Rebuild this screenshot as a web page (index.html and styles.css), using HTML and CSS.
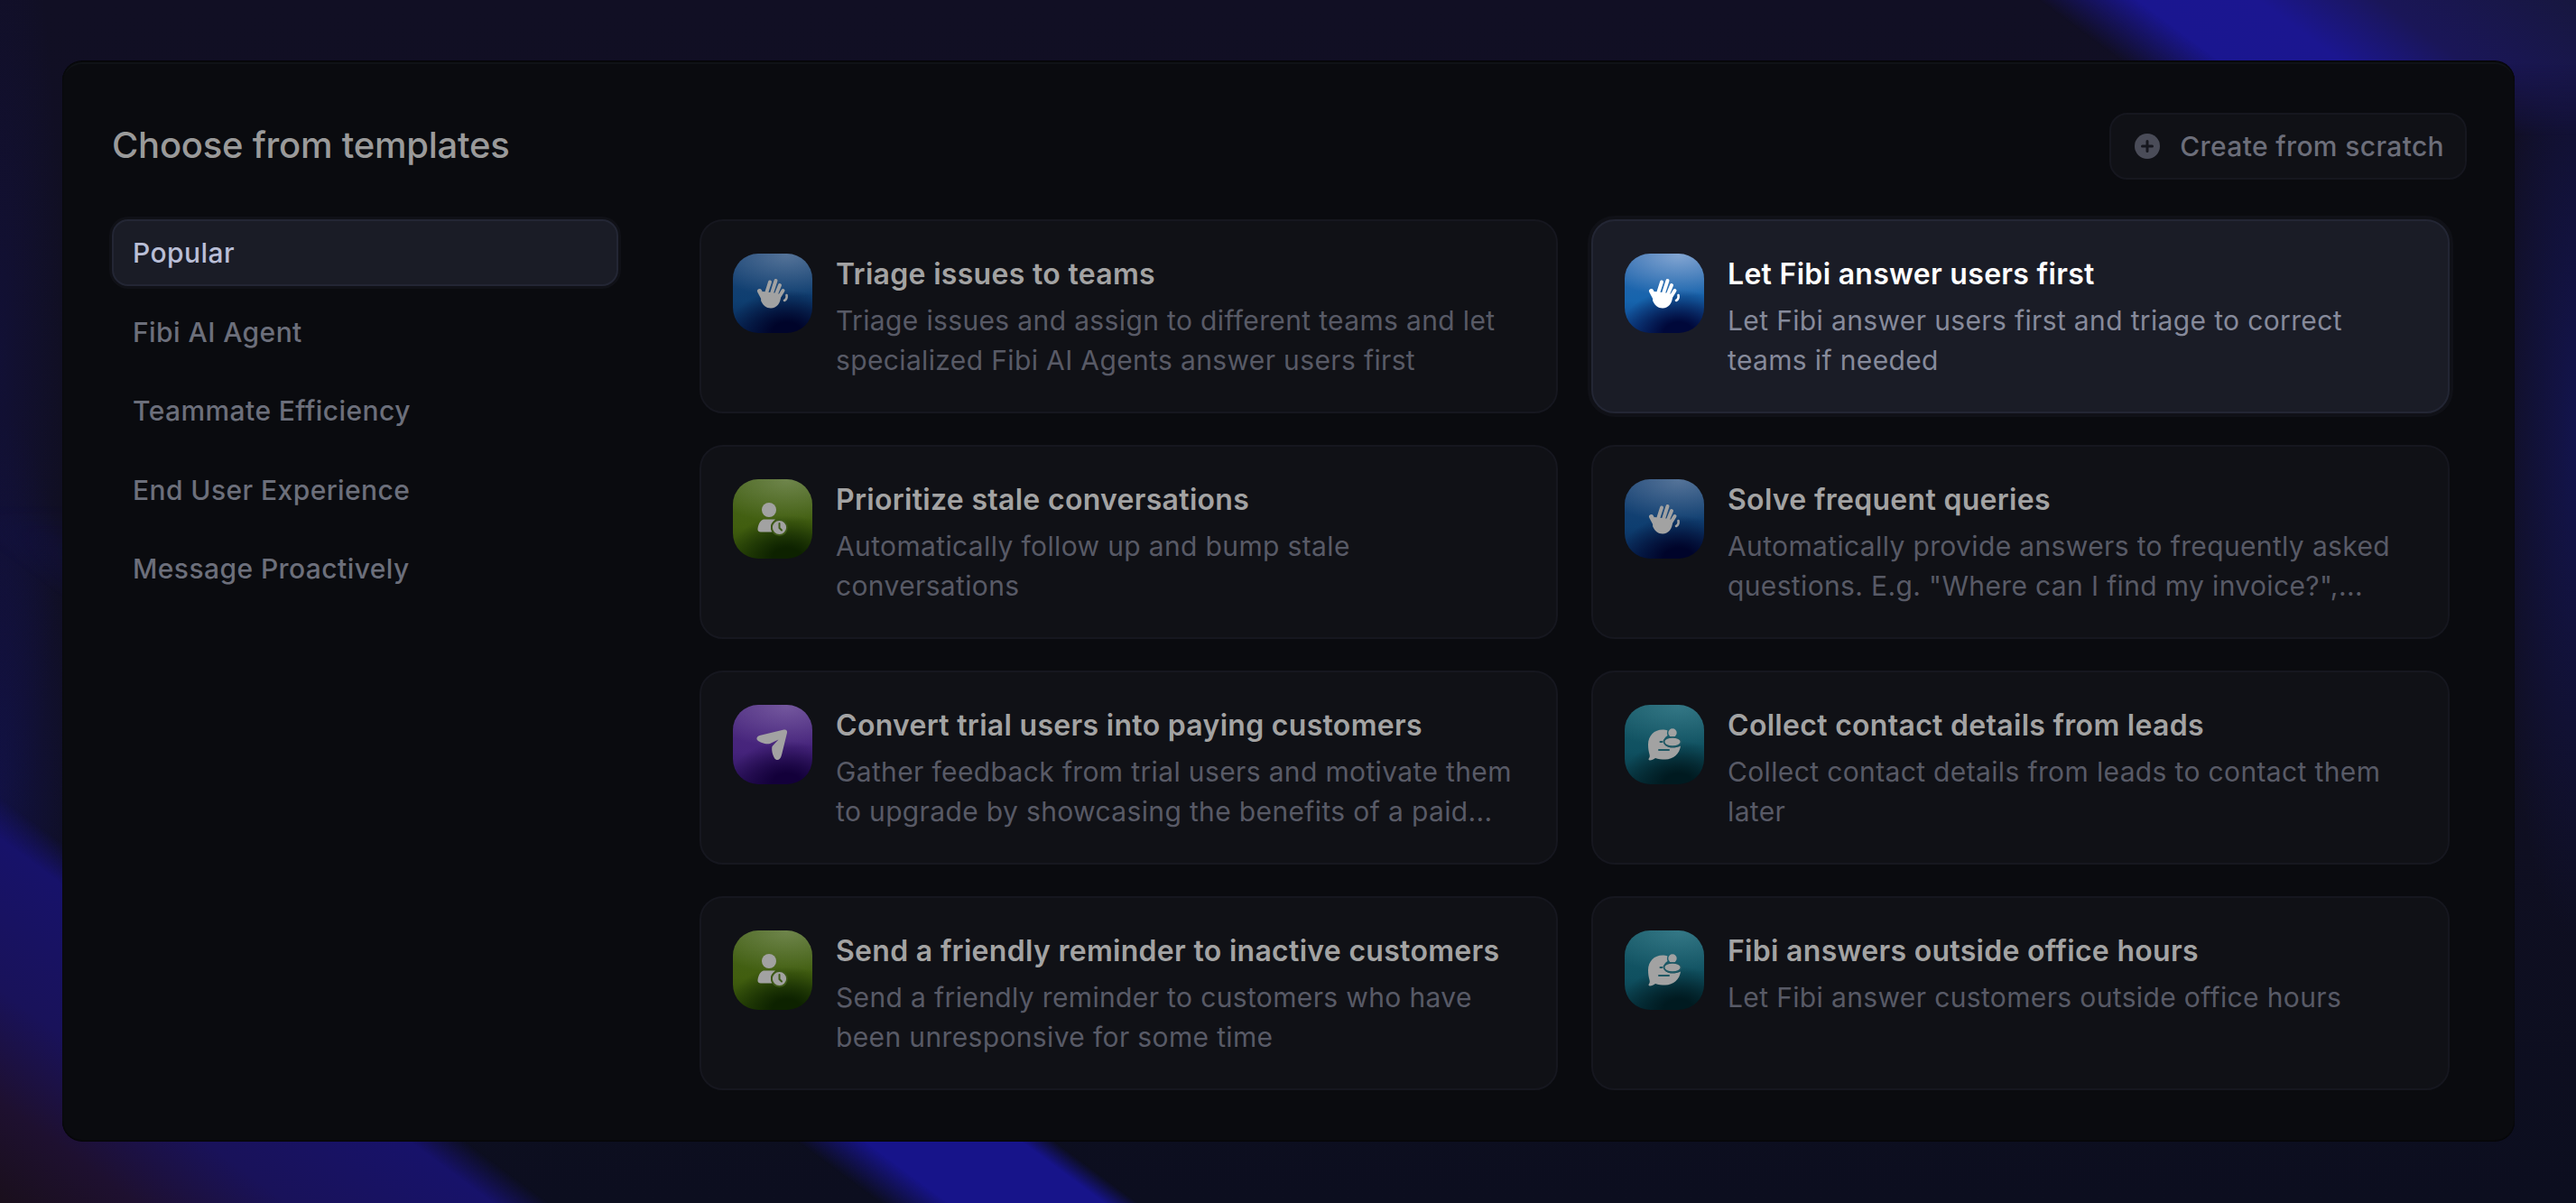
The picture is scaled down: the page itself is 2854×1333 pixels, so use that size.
FILE: index.html
```html
<!DOCTYPE html>
<html lang="en">
<head>
<meta charset="utf-8">
<title>Choose from templates</title>
<link rel="stylesheet" href="styles.css">
</head>
<body>
<svg class="defs" width="0" height="0" aria-hidden="true">
  <defs>
    <g id="i-hand">
      <path class="ln" stroke-width="5" d="M29.5 41.500 L34 50"/>
      <path class="ln" stroke-width="4" d="M41 31.500 L37 44"/>
      <path class="ln" stroke-width="4" d="M47.500 30 L43 44"/>
      <path class="ln" stroke-width="4" d="M52 35 L47.500 46"/>
      <path class="ln" stroke-width="4" d="M55.500 41 L50 50"/>
      <path class="fl" d="M33 42 L50 44 L53 47 C53 55 48.500 60.500 42 60.500 C37 60.500 33 57 31 52 Z"/>
      <path class="ln" stroke-width="2.600" d="M59.500 46 C60 48.500 59 51 57 52"/>
    </g>
    <g id="i-person">
      <circle class="fl" cx="40" cy="34" r="8"/>
      <path class="fl" d="M34 44.5 H47 C46 46 42 48 42 53 C42 55 42.5 57 43.5 58.5 H31 C28.500 58.500 27 57 27.500 54.500 C28.500 49 30.500 45.500 34 44.500 Z"/>
      <circle class="fl cut" cx="51.500" cy="53.500" r="8.500"/>
      <path class="hands" d="M51.500 49 V54 L54 56.500"/>
    </g>
    <g id="i-send">
      <path class="fl" d="M56.500 27.500 C59 27 60.500 28.500 60 31 L54 55.500 C52.500 61.500 48.500 62.500 46 59 C44 55.500 42.500 50 43.500 46 L50.500 38.500 L41 43 C36 44 30 41.500 27.500 39.500 C25.500 37.500 26.500 35 29.500 34 Z"/>
    </g>
    <g id="i-chat">
      <path class="fl" d="M42 27.500 C44 27.500 46 27.800 47.500 28.600 C46.800 30 46.700 32.500 47.500 34 C44.500 35.500 42.800 38.500 43.200 41.500 C43.800 45 47.500 47.500 53 47.500 C56 47.500 59 47 62 45.500 C61 54 54 60.500 45 60.500 C41 60.500 37 60 34 59 C32 60.500 30 61.500 28 61.500 C26.500 61.500 26 60.300 27 59 C27.800 58 28 56.500 27.500 55 C26.500 51.500 26 48 26 44 C26 34 33 27.500 42 27.500 Z"/>
      <circle class="fl" cx="53" cy="31" r="4.700"/>
      <ellipse class="fl cut" cx="53" cy="41" rx="9.500" ry="5.200"/>
      <path class="hands" d="M39.500 41 H41.500 M38 50 H49"/>
    </g>
  </defs>
</svg>
<main class="panel">
  <header class="head">
    <h1 class="title">Choose from templates</h1>
    <button class="scratch" type="button">
      <svg class="plus" viewBox="0 0 28 28" width="28" height="28"><circle cx="14" cy="14" r="14" fill="#4a4c58"/><path d="M14 8.500V19.500M8.500 14H19.500" stroke="#16171e" stroke-width="3" stroke-linecap="round"/></svg>
      <span>Create from scratch</span>
    </button>
  </header>
  <div class="body">
    <nav class="nav">
      <a class="nav-item active">Popular</a>
      <a class="nav-item">Fibi AI Agent</a>
      <a class="nav-item">Teammate Efficiency</a>
      <a class="nav-item">End User Experience</a>
      <a class="nav-item">Message Proactively</a>
    </nav>
    <section class="grid">
      <article class="card">
        <div class="ico blue"><svg viewBox="0 0 88 88" width="88" height="88"><use href="#i-hand"/></svg></div>
        <div class="txt"><h2>Triage issues to teams</h2><p>Triage issues and assign to different teams and let specialized Fibi AI Agents answer users first</p></div>
      </article>
      <article class="card active">
        <div class="ico blue"><svg viewBox="0 0 88 88" width="88" height="88"><use href="#i-hand"/></svg></div>
        <div class="txt"><h2>Let Fibi answer users first</h2><p>Let Fibi answer users first and triage to correct teams if needed</p></div>
      </article>
      <article class="card">
        <div class="ico green"><svg viewBox="0 0 88 88" width="88" height="88"><use href="#i-person"/></svg></div>
        <div class="txt"><h2>Prioritize stale conversations</h2><p>Automatically follow up and bump stale conversations</p></div>
      </article>
      <article class="card">
        <div class="ico blue"><svg viewBox="0 0 88 88" width="88" height="88"><use href="#i-hand"/></svg></div>
        <div class="txt"><h2>Solve frequent queries</h2><p>Automatically provide answers to frequently asked questions. E.g. "Where can I find my invoice?",...</p></div>
      </article>
      <article class="card">
        <div class="ico purple"><svg viewBox="0 0 88 88" width="88" height="88"><use href="#i-send"/></svg></div>
        <div class="txt"><h2>Convert trial users into paying customers</h2><p>Gather feedback from trial users and motivate them to upgrade by showcasing the benefits of a paid...</p></div>
      </article>
      <article class="card">
        <div class="ico teal"><svg viewBox="0 0 88 88" width="88" height="88"><use href="#i-chat"/></svg></div>
        <div class="txt"><h2>Collect contact details from leads</h2><p>Collect contact details from leads to contact them later</p></div>
      </article>
      <article class="card">
        <div class="ico green"><svg viewBox="0 0 88 88" width="88" height="88"><use href="#i-person"/></svg></div>
        <div class="txt"><h2>Send a friendly reminder to inactive customers</h2><p>Send a friendly reminder to customers who have been unresponsive for some time</p></div>
      </article>
      <article class="card">
        <div class="ico teal"><svg viewBox="0 0 88 88" width="88" height="88"><use href="#i-chat"/></svg></div>
        <div class="txt"><h2>Fibi answers outside office hours</h2><p>Let Fibi answer customers outside office hours</p></div>
      </article>
    </section>
  </div>
</main>
</body>
</html>
```
FILE: styles.css
```css
* { box-sizing: border-box; }
html, body { margin: 0; height: 100%; }
body {
  position: relative;
  width: 2854px;
  height: 1333px;
  overflow: hidden;
  padding: 68px 68px 69px 69px;
  font-family: Inter, "Liberation Sans", sans-serif;
  background:
    radial-gradient(ellipse 90px 420px at 0px 880px, rgba(20,20,110,.42), transparent),
    radial-gradient(ellipse 70px 560px at 0px 400px, rgba(20,18,80,.4), transparent),
    radial-gradient(ellipse 90px 560px at 2854px 480px, rgba(20,22,95,.7), transparent),
    linear-gradient(180deg, #110f24 0%, #100f22 60%, #0c0e1f 100%);
  display: flex;
}
body::before,
body::after {
  content: "";
  position: absolute;
  inset: 0;
}
/* streak leaving the top edge */
body::before {
  background: linear-gradient(36.5deg,
    transparent 2415px, #1a1690 2480px, #1b1690 2560px,
    #1a1658 2640px, #17173f 2770px);
  -webkit-mask-image: linear-gradient(180deg, #000 70px, transparent 150px);
  mask-image: linear-gradient(180deg, #000 70px, transparent 150px);
}
/* streaks leaving the bottom edge */
body::after {
  background: linear-gradient(36.5deg,
    #1a0f1c 0px, #1e1030 90px, #19125a 190px, #17126a 325px,
    transparent 362px, transparent 580px, #17148a 625px, #17148a 728px,
    transparent 750px);
  -webkit-mask-image: linear-gradient(180deg, transparent 560px, #000 900px);
  mask-image: linear-gradient(180deg, transparent 560px, #000 900px);
}
.defs { position: absolute; }
.panel {
  position: relative;
  z-index: 1;
  flex: 1;
  background: #0a0b0f;
  border-radius: 22px;
  box-shadow: inset 0 0 0 1px #08090b, inset 0 3px 0 #0f1216, 0 -1px 0 #050507, 0 1px 0 #050507;
  padding: 57px 53px 56px 55px;
  display: flex;
  flex-direction: column;
  gap: 44px;
}
.head {
  display: flex;
  align-items: center;
  justify-content: space-between;
}
.title {
  margin: 0 0 3px;
  font-size: 40px;
  font-weight: 500;
  color: #9a9a9a;
  letter-spacing: -0.25px;
}
.scratch {
  display: flex;
  align-items: center;
  gap: 22px;
  height: 74px;
  padding: 0 23px 0 26px;
  background: #101116;
  border: 2px solid #16171f;
  border-radius: 20px;
  font: 500 30px Inter, "Liberation Sans", sans-serif;
  letter-spacing: 0.36px;
  color: #6c6e7a;
}
.plus { display: block; }
.body {
  display: flex;
  gap: 90px;
  padding-right: 19px;
}
.nav {
  width: 561px;
  flex: none;
  display: flex;
  flex-direction: column;
  gap: 13.500px;
}
.nav-item {
  height: 74px;
  display: flex;
  align-items: center;
  padding-left: 21px;
  border: 2px solid transparent;
  border-radius: 18px;
  font-size: 30px;
  font-weight: 500;
  letter-spacing: 0.42px;
  color: #6c6f7b;
}
.nav-item.active {
  background: #1a1c26;
  border-color: #232634;
  box-shadow: 0 0 0 3px #101117;
  color: #b9bed6;
}
.grid {
  flex: 1;
  display: grid;
  grid-template-columns: 951px 951px;
  grid-auto-rows: 215px;
  column-gap: 37px;
  row-gap: 35px;
}
.card {
  display: flex;
  gap: 26px;
  padding: 36px 36px 0 35px;
  background: #101116;
  border: 2px solid #16171f;
  border-radius: 26px;
}
.card.active {
  background: #1a1c26;
  border-color: #232634;
  box-shadow: 0 0 0 4px #101117;
}
.ico {
  --glyph: #a2a2a2;
  width: 88px;
  height: 88px;
  flex: none;
  border-radius: 28px;
  overflow: hidden;
}
.ico svg { display: block; }
.fl { fill: var(--glyph); }
.cut { stroke: var(--cut); stroke-width: 1.800; }
.ln { fill: none; stroke: var(--glyph); stroke-linecap: round; }
.hands { fill: none; stroke: var(--cut); stroke-width: 2; stroke-linecap: round; stroke-linejoin: round; }
.ico.blue {
  --cut: #0e3e70;
  background:
    radial-gradient(ellipse 90px 46px at 68% 2%, rgba(170,185,205,.4), transparent),
    radial-gradient(ellipse 66px 48px at 68% 100%, #00042a 25%, transparent),
    linear-gradient(180deg, #1b4475, #0e3e70 60%, #072654);
}
.ico.green {
  --cut: #3f5a1a;
  background:
    radial-gradient(ellipse 90px 46px at 68% 2%, rgba(185,195,165,.34), transparent),
    radial-gradient(ellipse 66px 48px at 68% 100%, #0d2200 25%, transparent),
    linear-gradient(180deg, #47641c, #415e0f 60%, #2a4607);
}
.ico.purple {
  --cut: #45237b;
  background:
    radial-gradient(ellipse 90px 46px at 68% 2%, rgba(190,170,215,.34), transparent),
    radial-gradient(ellipse 66px 48px at 68% 100%, #13003a 25%, transparent),
    linear-gradient(180deg, #4d2c80, #45237b 60%, #2a1259);
}
.ico.teal {
  --cut: #1f5864;
  background:
    radial-gradient(ellipse 90px 46px at 68% 2%, rgba(110,180,195,.32), transparent),
    radial-gradient(ellipse 66px 48px at 68% 100%, #001a20 25%, transparent),
    linear-gradient(180deg, #185a68, #0f5060 60%, #073541);
}
.txt { min-width: 0; padding-top: 1px; }
.txt h2 {
  margin: 0 0 7px;
  font-size: 32px;
  line-height: 44px;
  font-weight: 600;
  letter-spacing: 0.3px;
  color: #a3a3a3;
}
.txt p {
  margin: 0;
  font-size: 30px;
  line-height: 44px;
  letter-spacing: 0.36px;
  color: #585a66;
}
.card.active h2 { color: #fff; }
.card.active p { color: #868a9b; }
.card.active .ico.blue {
  --glyph: #fff;
  --cut: #1664ad;
  background:
    radial-gradient(ellipse 90px 46px at 68% 2%, rgba(200,215,240,.55), transparent),
    radial-gradient(ellipse 66px 48px at 68% 100%, #00083a 25%, transparent),
    linear-gradient(180deg, #2d68ad, #1664ad 60%, #0c3e86);
}
```
